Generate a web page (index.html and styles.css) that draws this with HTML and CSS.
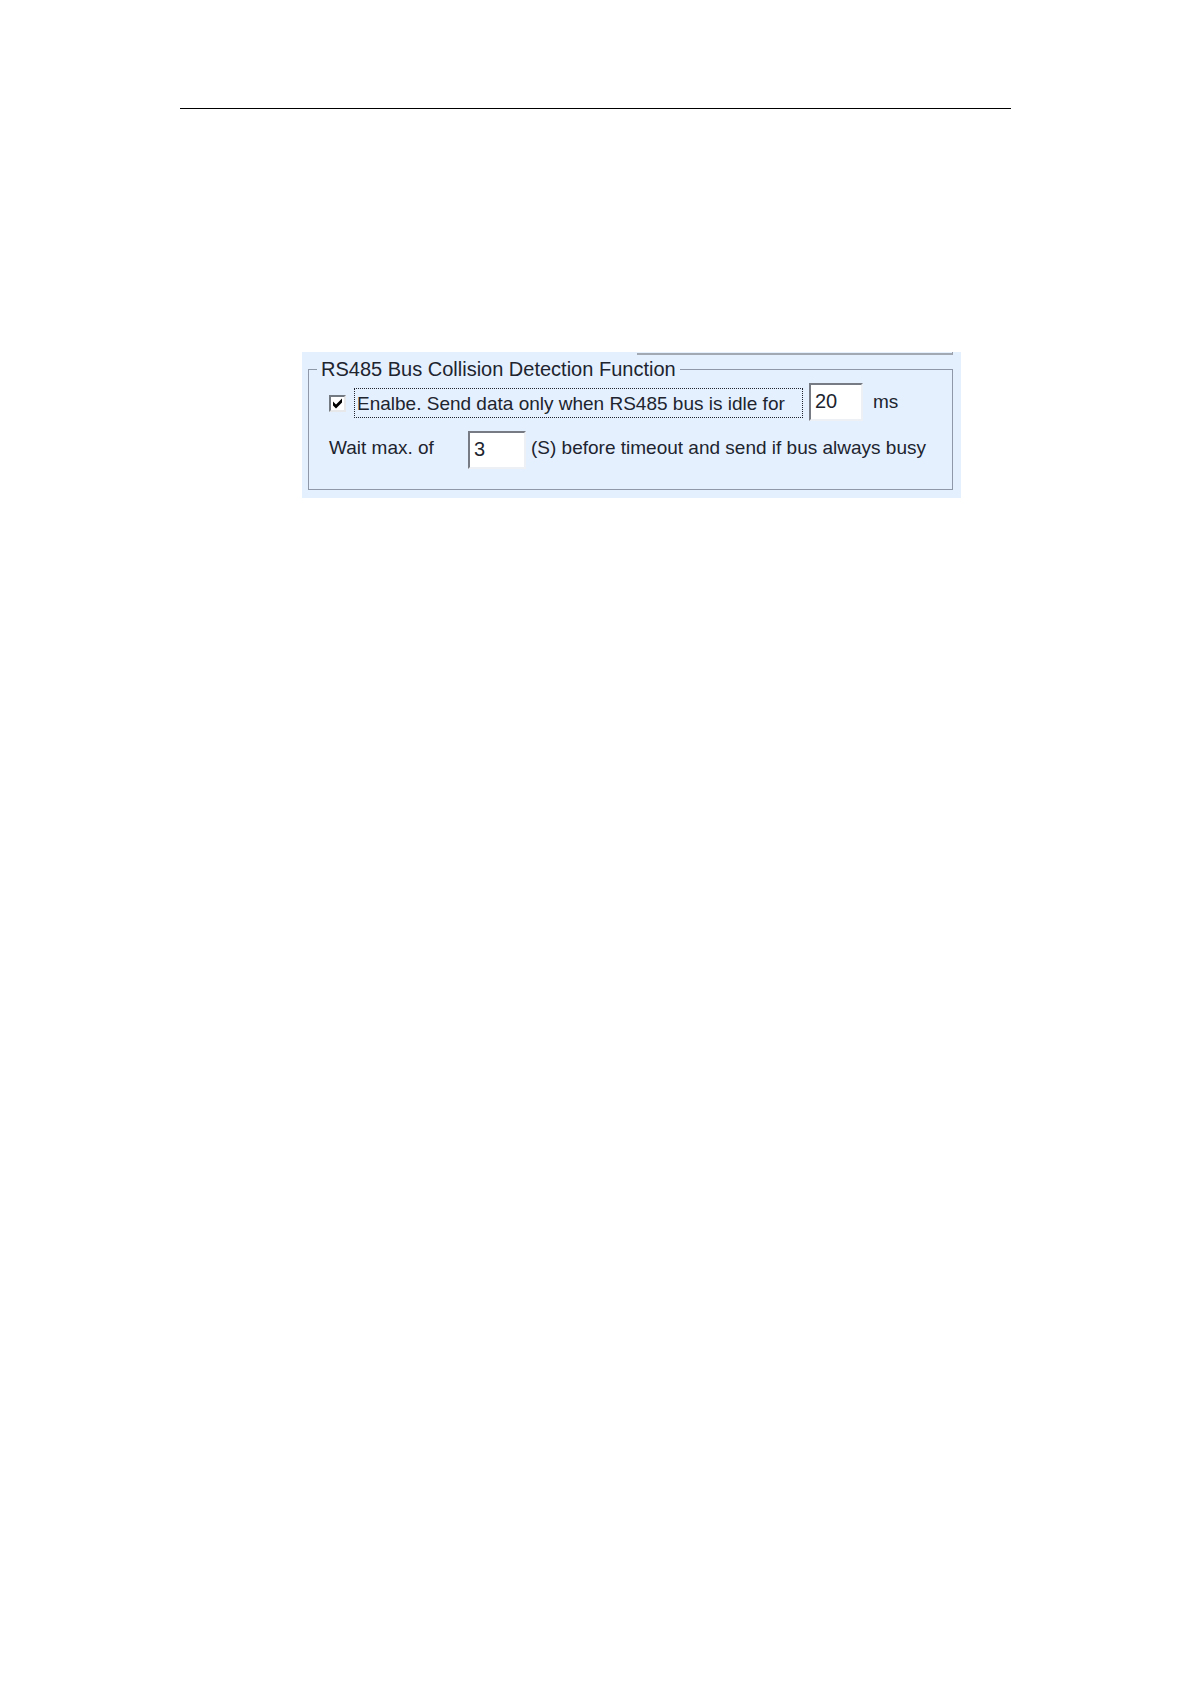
FILE: index.html
```html
<!DOCTYPE html>
<html lang="en">
<head>
<meta charset="utf-8">
<meta name="viewport" content="width=device-width, initial-scale=1">
<title>RS485 Bus Collision Detection</title>
<link rel="stylesheet" href="styles.css">
</head>
<body>
<main class="page">
  <hr class="page-rule">
  <form class="panel">
    <div class="panel-edge"></div>
    <fieldset class="group">
      <legend class="group-title">RS485 Bus Collision Detection Function</legend>
      <div class="row">
        <span class="check">
          <input class="check-box" type="checkbox" id="enable" checked>
          <svg class="check-mark" viewBox="0 0 17 17" aria-hidden="true"><path d="M4 6.500 L7 9.500 L13 3.500 V7.500 L7 13.500 L4 10.500 Z"/></svg>
        </span>
        <label class="focus-label" for="enable">Enalbe. Send data only when RS485 bus is idle for</label>
        <input class="field" type="text" id="idle" value="20" aria-label="Bus idle time">
        <label class="unit" for="idle">ms</label>
      </div>
      <div class="row">
        <label class="wait-label" for="wait">Wait max. of</label>
        <input class="field field-wide" type="text" id="wait" value="3">
        <label class="wait-note" for="wait">(S) before timeout and send if bus always busy</label>
      </div>
    </fieldset>
  </form>
</main>
</body>
</html>
```
FILE: styles.css
```css
* {
  box-sizing: border-box;
}

body {
  margin: 0;
  background: #fff;
  color: #20242e;
  font-family: "Liberation Sans", Arial, sans-serif;
  font-size: 20px;
  line-height: 24px;
}

.page {
  padding: 108px 180px;
}

.page-rule {
  height: 1px;
  margin: 0 0 243px;
  border: 0;
  background: #000;
}

.panel {
  max-width: 659px;
  margin-left: 122px;
  padding: 0 8px 8px 6px;
  background: #e5f0fe;
}

/* Bottom edge of the box above this group */
.panel-edge {
  height: 3px;
  margin: 0 0 2px 329px;
  border: solid #969da8;
  border-width: 0 1px 2px 0;
  border-bottom-color: #a3a9b2;
}

.group {
  min-width: 0;
  margin: 0;
  padding: 2px 8px 20px;
  border: 1px solid #8e98a8;
}

.group-title {
  padding: 0 4px;
}

.row {
  display: flex;
  align-items: center;
  padding-left: 12px;
  font-size: 19px;
  white-space: nowrap;
}

.row + .row {
  margin-top: 10px;
}

.check {
  display: grid;
  flex: none;
  width: 17px;
  height: 17px;
  margin: 2px 8px 0 0;
}

.check-box,
.check-mark {
  grid-area: 1 / 1;
  width: 17px;
  height: 17px;
  margin: 0;
}

.check-box {
  appearance: none;
  border: 2px solid;
  border-color: #747a82 #e6e8ea #e6e8ea #747a82;
  background: #fff;
}

.check-mark {
  visibility: hidden;
  fill: #000;
  pointer-events: none;
}

.check-box:checked + .check-mark {
  visibility: visible;
}

.focus-label {
  flex: none;
  width: 449px;
  height: 30px;
  margin: 2px 6px 0 0;
  padding: 3px 0 0 2px;
  border: 1px dotted #20242e;
}

.field {
  flex: none;
  width: 54px;
  height: 38px;
  padding: 0 4px 2px;
  border: 2px solid;
  border-color: #777c84 #edf0f4 #edf0f4 #777c84;
  border-radius: 0;
  background: #fff;
  color: inherit;
  font: inherit;
  font-size: 20px;
}

.field-wide {
  width: 58px;
}

.unit {
  margin-left: 10px;
}

.wait-label {
  flex: none;
  width: 139px;
  margin-bottom: 4px;
}

.wait-note {
  margin: 0 0 4px 5px;
}
```
